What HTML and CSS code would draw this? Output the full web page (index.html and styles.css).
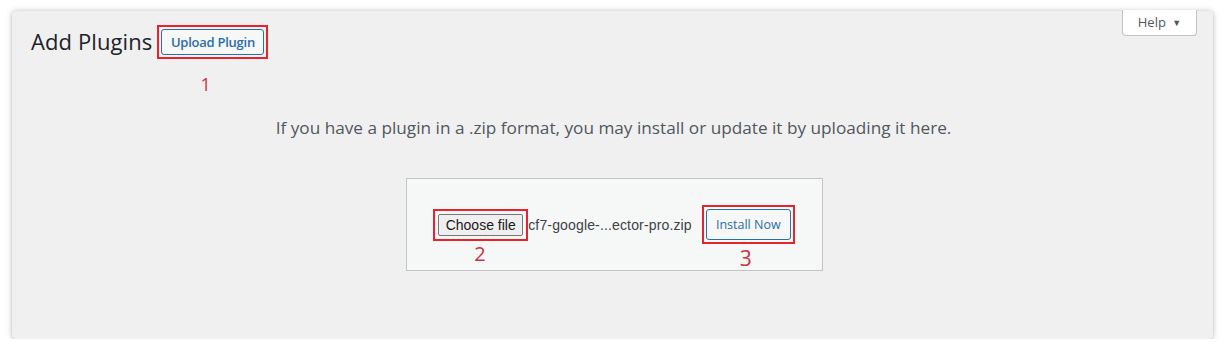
FILE: index.html
```html
<!DOCTYPE html>
<html lang="en">
<head>
<meta charset="utf-8">
<title>Add Plugins</title>
<link rel="stylesheet" href="styles.css">
</head>
<body>
<div class="panel">
  <button class="help-tab" type="button">Help <span class="caret">▼</span></button>
  <div class="header">
    <h1 class="title">Add Plugins</h1>
    <span class="mark mark-1">
      <button class="btn-upload" type="button">Upload Plugin</button>
      <span class="num num-1">1</span>
    </span>
  </div>
  <p class="help-text">If you have a plugin in a .zip format, you may install or update it by uploading it here.</p>
  <div class="upload-box">
    <span class="mark mark-2">
      <button class="btn-file" type="button">Choose file</button>
      <span class="num num-2">2</span>
    </span>
    <span class="file-name">cf7-google-...ector-pro.zip</span>
    <span class="mark mark-3">
      <button class="btn-install" type="button">Install Now</button>
      <span class="num num-3">3</span>
    </span>
  </div>
</div>
</body>
</html>
```
FILE: styles.css
```css
* { box-sizing: border-box; }
html, body { margin: 0; padding: 0; background: #ffffff; }
body { font-family: "Open Sans", "Noto Sans", sans-serif; color: #1d2327; }

.panel {
  position: relative;
  margin: 11px 0 0 12px;
  width: 1201px;
  height: 328px;
  background: #f0f0f1;
  border-radius: 4px;
  box-shadow: 0 0 6px rgba(0,0,0,0.22), 0 1px 3px rgba(0,0,0,0.12);
  padding: 18px 0 0 19px;
}

.help-tab {
  position: absolute;
  top: -1px;
  right: 16px;
  width: 75px;
  height: 26px;
  background: #ffffff;
  border: 1px solid #c3c4c7;
  border-top: none;
  border-radius: 0 0 4px 4px;
  font-family: "Open Sans", sans-serif;
  font-size: 13px;
  color: #50575e;
  padding: 0 0 2px 0;
}
.help-tab .caret { font-size: 9px; margin-left: 3px; position: relative; top: -1px; }

.header { display: flex; align-items: center; height: 26px; }
.title {
  margin: 0 9px 0 0;
  font-size: 22px;
  font-weight: 400;
  line-height: 26px;
  color: #1d2327;
  letter-spacing: 0.1px;
  position: relative;
  top: -1px;
}

.mark { position: relative; display: inline-flex; }
.mark-1 { outline: 2px solid #e8232b; outline-offset: 2px; }
.mark-2 { outline: 2px solid #e8232b; outline-offset: 3px; }
.mark-3 { outline: 2px solid #e8232b; outline-offset: 2px; }

.num {
  position: absolute;
  font-family: "Open Sans", sans-serif;
  color: #cc3344;
  line-height: 1;
}
.num-1 { font-size: 18px; left: 39px; top: 46px; }
.num-2 { font-size: 20px; left: 36px; top: 30px; }
.num-3 { font-size: 21px; left: 34px; top: 39px; }

.btn-upload {
  height: 26px;
  width: 103px;
  padding: 0;
  background: #f6f7f7;
  border: 1px solid #2271b1;
  border-radius: 3px;
  color: #2a6eaa;
  font-family: "Open Sans", sans-serif;
  font-weight: 600;
  font-size: 13px;
  letter-spacing: -0.25px;
}

.help-text {
  margin: 61px 0 0 -19px;
  text-align: center;
  font-size: 17.2px;
  line-height: 24px;
  color: #50575e;
  padding-left: 2px;
}

.upload-box {
  margin: 38px 0 0 375px;
  width: 417px;
  height: 93px;
  background: #f6f7f7;
  border: 1px solid #c3c4c7;
  display: flex;
  align-items: center;
  justify-content: center;
}

.btn-file {
  height: 22px;
  width: 85px;
  padding: 0;
  background: #efefef;
  border: 1px solid #767676;
  border-radius: 2px;
  font-family: "Liberation Sans", Arial, sans-serif;
  font-size: 14px;
  color: #1a1a1a;
}

.file-name {
  margin: 0 14px 0 5px;
  font-family: "Liberation Sans", Arial, sans-serif;
  font-size: 14px;
  letter-spacing: 0.15px;
  color: #3c434a;
}

.btn-install {
  height: 31px;
  width: 85px;
  padding: 0;
  background: #f6f7f7;
  border: 1px solid #2271b1;
  border-radius: 3px;
  color: #2a6eaa;
  font-family: "Open Sans", sans-serif;
  font-size: 12.5px;
}
```
